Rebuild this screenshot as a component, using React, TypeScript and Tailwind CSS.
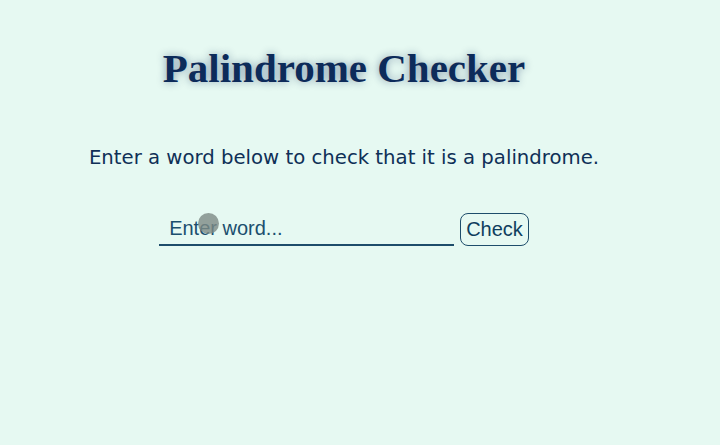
import React, { useState } from 'react';

export default function App() {
  const [word, setWord] = useState('');

  return (
    <div className="relative min-h-[445px] w-full bg-[#e6f9f2]">
      <div className="flex w-[688px] flex-col items-center pt-[42px]">
        <h1
          className="text-[41px] font-bold leading-[52px] text-[#0d2b5a]"
          style={{ fontFamily: '"Liberation Serif", "Times New Roman", serif', textShadow: '0 0 8px rgba(13,43,90,0.45)' }}
        >
          Palindrome Checker
        </h1>
        <p
          className="mt-[50px] text-[19.7px] leading-[28px] text-[#0f3057]"
          style={{ fontFamily: '"DejaVu Sans", "Open Sans", sans-serif' }}
        >
          Enter a word below to check that it is a palindrome.
        </p>
        <div className="mt-[40px] flex items-center gap-[6px]" style={{ fontFamily: '"Liberation Sans", Arial, sans-serif' }}>
          <input
            value={word}
            onChange={(e) => setWord(e.target.value)}
            placeholder="Enter word..."
            className="h-[34px] w-[295px] border-b-2 border-[#1e4d6b] bg-transparent px-[10px] text-[20px] text-[#1b4f6e] outline-none placeholder:text-[#1b4f6e]"
          />
          <button className="h-[33px] rounded-[8px] border border-[#1e4d6b] px-[5px] text-[20px] text-[#0f3e5e]">
            Check
          </button>
        </div>
      </div>
      <div className="pointer-events-none absolute left-[198px] top-[213px] h-[21px] w-[21px] rounded-full bg-[#7d8a84]/80" />
    </div>
  );
}
